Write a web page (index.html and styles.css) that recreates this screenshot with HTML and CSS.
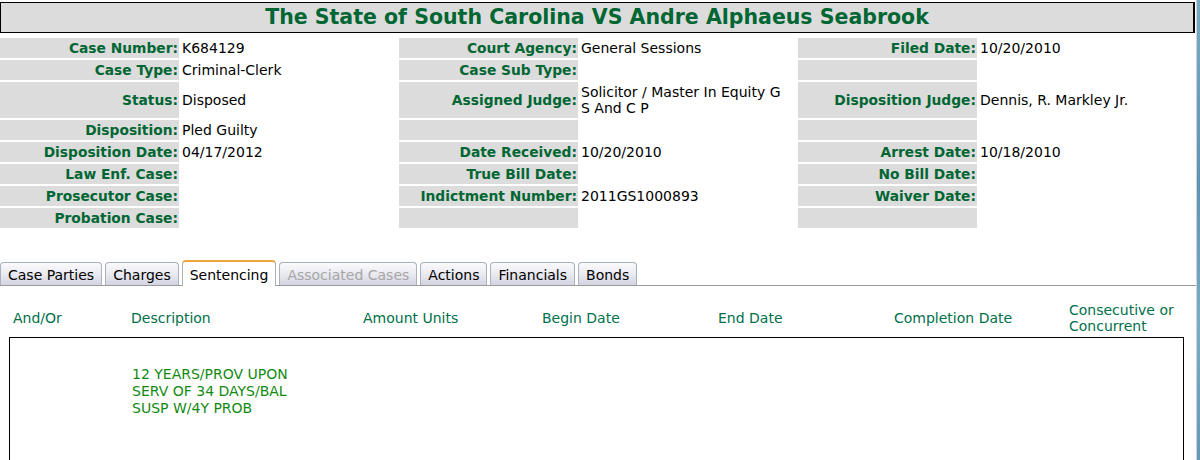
FILE: index.html
```html
<!DOCTYPE html>
<html lang="en">
<head>
  <meta charset="UTF-8">
  <title>Case Details - K684129</title>
  <link rel="stylesheet" href="styles.css">
</head>
<body>
<div class="page">
  <div class="main">
    <h1 class="case-title">The State of South Carolina VS Andre Alphaeus Seabrook</h1>

    <div class="details">
      <div class="lbl">Case Number:</div><div class="val">K684129</div>
      <div class="lbl">Court Agency:</div><div class="val">General Sessions</div>
      <div class="lbl">Filed Date:</div><div class="val">10/20/2010</div>

      <div class="lbl">Case Type:</div><div class="val">Criminal-Clerk</div>
      <div class="lbl">Case Sub Type:</div><div class="val"></div>
      <div class="lbl"></div><div class="val"></div>

      <div class="lbl tall">Status:</div><div class="val">Disposed</div>
      <div class="lbl">Assigned Judge:</div><div class="val">Solicitor / Master In Equity G S And C P</div>
      <div class="lbl">Disposition Judge:</div><div class="val">Dennis, R. Markley Jr.</div>

      <div class="lbl">Disposition:</div><div class="val">Pled Guilty</div>
      <div class="lbl"></div><div class="val"></div>
      <div class="lbl"></div><div class="val"></div>

      <div class="lbl">Disposition Date:</div><div class="val">04/17/2012</div>
      <div class="lbl">Date Received:</div><div class="val">10/20/2010</div>
      <div class="lbl">Arrest Date:</div><div class="val">10/18/2010</div>

      <div class="lbl">Law Enf. Case:</div><div class="val"></div>
      <div class="lbl">True Bill Date:</div><div class="val"></div>
      <div class="lbl">No Bill Date:</div><div class="val"></div>

      <div class="lbl">Prosecutor Case:</div><div class="val"></div>
      <div class="lbl">Indictment Number:</div><div class="val">2011GS1000893</div>
      <div class="lbl">Waiver Date:</div><div class="val"></div>

      <div class="lbl">Probation Case:</div><div class="val"></div>
      <div class="lbl"></div><div class="val"></div>
      <div class="lbl"></div><div class="val"></div>
    </div>

    <ul class="tabs">
      <li class="tab">Case Parties</li>
      <li class="tab">Charges</li>
      <li class="tab active">Sentencing</li>
      <li class="tab disabled">Associated Cases</li>
      <li class="tab">Actions</li>
      <li class="tab">Financials</li>
      <li class="tab">Bonds</li>
    </ul>

    <div class="sent-head">
      <div>And/Or</div>
      <div>Description</div>
      <div>Amount Units</div>
      <div>Begin Date</div>
      <div>End Date</div>
      <div>Completion Date</div>
      <div>Consecutive or Concurrent</div>
    </div>

    <div class="sent-box">
      <div class="sent-row">
        <div></div>
        <div class="desc">12 YEARS/PROV UPON SERV OF 34 DAYS/BAL SUSP W/4Y PROB</div>
        <div></div>
        <div></div>
        <div></div>
        <div></div>
        <div></div>
      </div>
    </div>
  </div>
  <div class="edge"></div>
</div>
</body>
</html>
```

FILE: styles.css
```css
html, body {
  margin: 0;
  height: 100%;
  overflow: hidden;
}
body {
  font-family: "DejaVu Sans", Verdana, sans-serif;
  font-size: 14px;
  color: #000;
  background: #fff;
}
.page {
  display: flex;
  height: 100%;
}
.main {
  flex: 1;
  padding-top: 2px;
}
.edge {
  width: 3px;
  border-left: 1px solid #d4d4d4;
  background: linear-gradient(180deg, #79a9c4, #5f93b3 40%, #7aabc6 70%, #6598b6);
}
.case-title {
  margin: 0 1px 0 0;
  height: 29px;
  line-height: 29px;
  background: #dcdcdc;
  border: 1px solid #000;
  border-right-width: 2px;
  text-align: center;
  font-size: 20.5px;
  font-weight: bold;
  color: #006633;
}
.details {
  display: grid;
  grid-template-columns: 179px 220px 179px 220px 179px 1fr;
  row-gap: 2px;
  margin-top: 5px;
}
.lbl, .val {
  display: flex;
  align-items: center;
  min-height: 16px;
  padding: 2px 2px;
  line-height: 16px;
}
.lbl {
  justify-content: flex-end;
  background: #dcdcdc;
  font-weight: bold;
  font-size: 13.8px;
  color: #006633;
  white-space: nowrap;
  padding-right: 1px;
}
.val {
  padding-left: 3px;
  padding-right: 8px;
}
.tabs {
  display: flex;
  align-items: flex-end;
  gap: 3px;
  list-style: none;
  margin: 32px 0 0 0;
  padding: 0;
  border-bottom: 1px solid #9a9a9a;
}
.tab {
  height: 22px;
  line-height: 24px;
  padding: 0 7px;
  border: 1px solid #a9b1bb;
  border-bottom: none;
  border-radius: 4px 4px 0 0;
  background: linear-gradient(180deg, #fbfbfd, #e6e6ee 60%, #d3d3e2);
}
.tab.active {
  height: 24px;
  line-height: 27px;
  margin-bottom: -1px;
  border-top: 2px solid #f2a43c;
  background: #fff;
}
.tab.disabled {
  color: #a6a6a6;
}
.sent-head {
  display: grid;
  grid-template-columns: 118px 232px 179px 176px 176px 175px 1fr;
  align-items: center;
  margin: 16px 13px 3px 13px;
  line-height: 16px;
  color: #00704a;
}
.sent-box {
  margin: 0 12px 0 9px;
  height: 200px;
  border: 1px solid #000;
}
.sent-row {
  display: grid;
  grid-template-columns: 118px 175px 1fr 1fr 1fr 1fr 1fr;
  padding: 28px 0 0 4px;
}
.desc {
  line-height: 17px;
  color: #128a12;
}
```
